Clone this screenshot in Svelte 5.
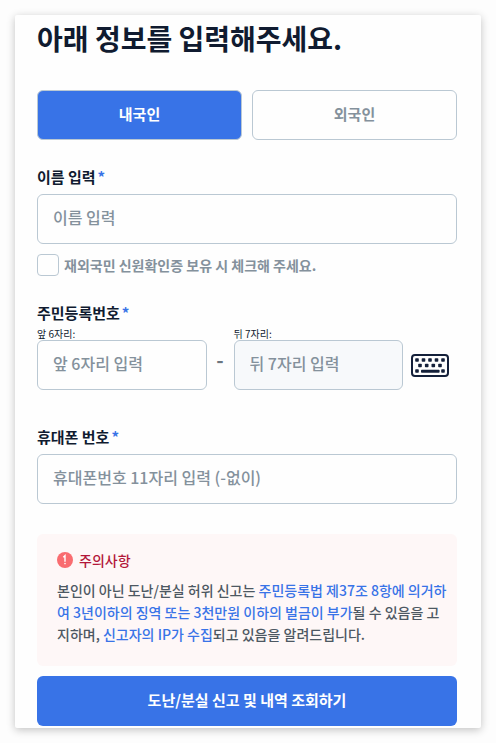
<script>
  let nationality = $state('domestic');
  let name = $state('');
  let overseas = $state(false);
  let front = $state('');
  let back = $state('');
  let phone = $state('');

  const types = [
    { id: 'domestic', label: '내국인' },
    { id: 'foreign', label: '외국인' }
  ];
</script>

<main class="card">
  <h1>아래 정보를 입력해주세요.</h1>

  <form onsubmit={(e) => e.preventDefault()}>
    <div class="tabs">
      {#each types as type}
        <button
          type="button"
          class="tab"
          class:active={nationality === type.id}
          aria-pressed={nationality === type.id}
          onclick={() => (nationality = type.id)}
        >
          {type.label}
        </button>
      {/each}
    </div>

    <div class="field">
      <label class="label" for="name">이름 입력<span class="required">*</span></label>
      <input class="text" id="name" type="text" placeholder="이름 입력" bind:value={name} />
      <label class="check">
        <input type="checkbox" bind:checked={overseas} />
        <span>재외국민 신원확인증 보유 시 체크해 주세요.</span>
      </label>
    </div>

    <div class="field" role="group" aria-labelledby="rrn">
      <div class="label tight" id="rrn">주민등록번호<span class="required">*</span></div>
      <div class="rrn">
        <div class="part">
          <label for="front">앞 6자리:</label>
          <input class="text" id="front" type="text" maxlength="6" placeholder="앞 6자리 입력" bind:value={front} />
        </div>
        <span class="dash">-</span>
        <div class="part">
          <label for="back">뒤 7자리:</label>
          <input class="text" id="back" type="password" maxlength="7" placeholder="뒤 7자리 입력" readonly bind:value={back} />
        </div>
        <button type="button" class="keyboard" aria-label="보안 키패드">
          <svg width="38" height="23" viewBox="0 0 38 23" fill="#14203a">
            <rect x="1" y="1" width="36" height="21" rx="3" fill="none" stroke="#14203a" stroke-width="2" />
            {#each [4.2, 10.7, 17.2, 23.7, 30.2] as x}
              <rect {x} y="4.2" width="3.6" height="3.6" rx="0.8" />
            {/each}
            {#each [7.2, 13.9, 20.5, 27.2] as x}
              <rect {x} y="9.7" width="3.6" height="3.6" rx="0.8" />
            {/each}
            <rect x="4.2" y="15.2" width="3.6" height="3.6" rx="0.8" />
            <rect x="10" y="15.7" width="18.6" height="3" rx="0.8" />
            <rect x="30.2" y="15.2" width="3.6" height="3.6" rx="0.8" />
          </svg>
        </button>
      </div>
    </div>

    <div class="field phone">
      <label class="label" for="phone">휴대폰 번호<span class="required">*</span></label>
      <input class="text" id="phone" type="tel" maxlength="11" placeholder="휴대폰번호 11자리 입력 (-없이)" bind:value={phone} />
    </div>

    <section class="notice">
      <h2>
        <svg width="16" height="16" viewBox="0 0 16 16">
          <circle cx="8" cy="8" r="8" fill="#f96c70" />
          <path d="M6.3 5.3 8 3.7V9.8" fill="none" stroke="#fff" stroke-width="1.4" />
          <circle cx="8" cy="11.6" r="0.8" fill="#fff" />
        </svg>
        주의사항
      </h2>
      <p>
        본인이 아닌 도난/분실 허위 신고는 <em>주민등록법 제37조 8항에 의거하여 3년이하의 징역 또는 3천만원 이하의 벌금이 부가</em>될 수 있음을 고지하며, <em>신고자의 IP가 수집</em>되고 있음을 알려드립니다.
      </p>
    </section>

    <button type="submit" class="submit">도난/분실 신고 및 내역 조회하기</button>
  </form>
</main>

<style>
  :global(body) {
    background: #fdfdfd;
  }

  .card {
    margin: 15px;
    padding: 3px 24px 2px 22px;
    background: #fefefe;
    border-radius: 2px;
    box-shadow: 0 2px 8px rgba(0, 0, 0, 0.24);
    color: #101b30;
    font-family: "Noto Sans CJK KR", sans-serif;
  }

  .card * {
    box-sizing: border-box;
  }

  button,
  input {
    font-family: inherit;
  }

  button {
    cursor: pointer;
  }

  h1 {
    margin: 0 0 32px;
    font-size: 28px;
    line-height: 40px;
    font-weight: 700;
  }

  .tabs {
    display: flex;
    gap: 10px;
    margin-bottom: 25px;
  }

  .tab {
    flex: 1;
    height: 50px;
    padding: 0 0 3px;
    border: 1px solid #bac8d3;
    border-radius: 6px;
    background: #fefefe;
    color: #84919c;
    font-size: 15px;
    font-weight: 700;
  }

  .tab.active {
    background: #3873e7;
    color: #fff;
  }

  .field {
    margin-bottom: 25px;
  }

  .label {
    display: block;
    margin-bottom: 5px;
    font-size: 15px;
    line-height: 24px;
    font-weight: 700;
  }

  .label.tight {
    margin-bottom: 3px;
  }

  .required {
    margin-left: 2px;
    color: #3873e7;
  }

  .text {
    display: block;
    width: 100%;
    height: 50px;
    padding: 0 15px 4px;
    border: 1px solid #bac8d3;
    border-radius: 6px;
    background: #fefefe;
    color: #101b30;
    font-size: 16px;
    font-weight: 500;
  }

  .text::placeholder {
    color: #84919c;
    opacity: 1;
  }

  .text:read-only {
    background: #f7f9fb;
  }

  .check {
    display: flex;
    align-items: center;
    gap: 5px;
    margin-top: 10px;
    color: #84919c;
    font-size: 14px;
    line-height: 22px;
    font-weight: 700;
  }

  .check input {
    appearance: none;
    width: 22px;
    height: 22px;
    margin: 0;
    border: 1px solid #bac8d3;
    border-radius: 4px;
    background: #fefefe;
  }

  .check input:checked {
    background: #3873e7;
  }

  .rrn {
    display: flex;
    align-items: flex-end;
  }

  .rrn .part {
    flex: 1;
    min-width: 0;
  }

  .part label {
    display: block;
    font-size: 10px;
    line-height: 12px;
  }

  .dash {
    width: 27px;
    height: 50px;
    color: #6b7680;
    font-size: 20px;
    line-height: 40px;
    font-weight: 700;
    text-align: center;
  }

  .keyboard {
    display: flex;
    align-items: center;
    justify-content: center;
    width: 54px;
    height: 50px;
    padding: 0;
    border: 0;
    background: none;
  }

  .phone {
    margin: 35px 0 30px;
  }

  .notice {
    margin-bottom: 10px;
    padding: 15px 8px 21px 20px;
    border-radius: 6px;
    background: #fef7f7;
  }

  h2 {
    display: flex;
    align-items: center;
    gap: 6px;
    margin: 0 0 8px;
    color: #b3173a;
    font-size: 14px;
    line-height: 22px;
    font-weight: 500;
  }

  p {
    margin: 0;
    color: #4d5862;
    font-size: 14px;
    line-height: 22px;
    font-weight: 500;
  }

  em {
    color: #3873e7;
    font-style: normal;
  }

  .submit {
    display: block;
    width: 100%;
    height: 50px;
    padding: 0 0 3px;
    border: 0;
    border-radius: 6px;
    background: #3873e7;
    color: #fff;
    font-size: 15px;
    font-weight: 700;
  }
</style>
